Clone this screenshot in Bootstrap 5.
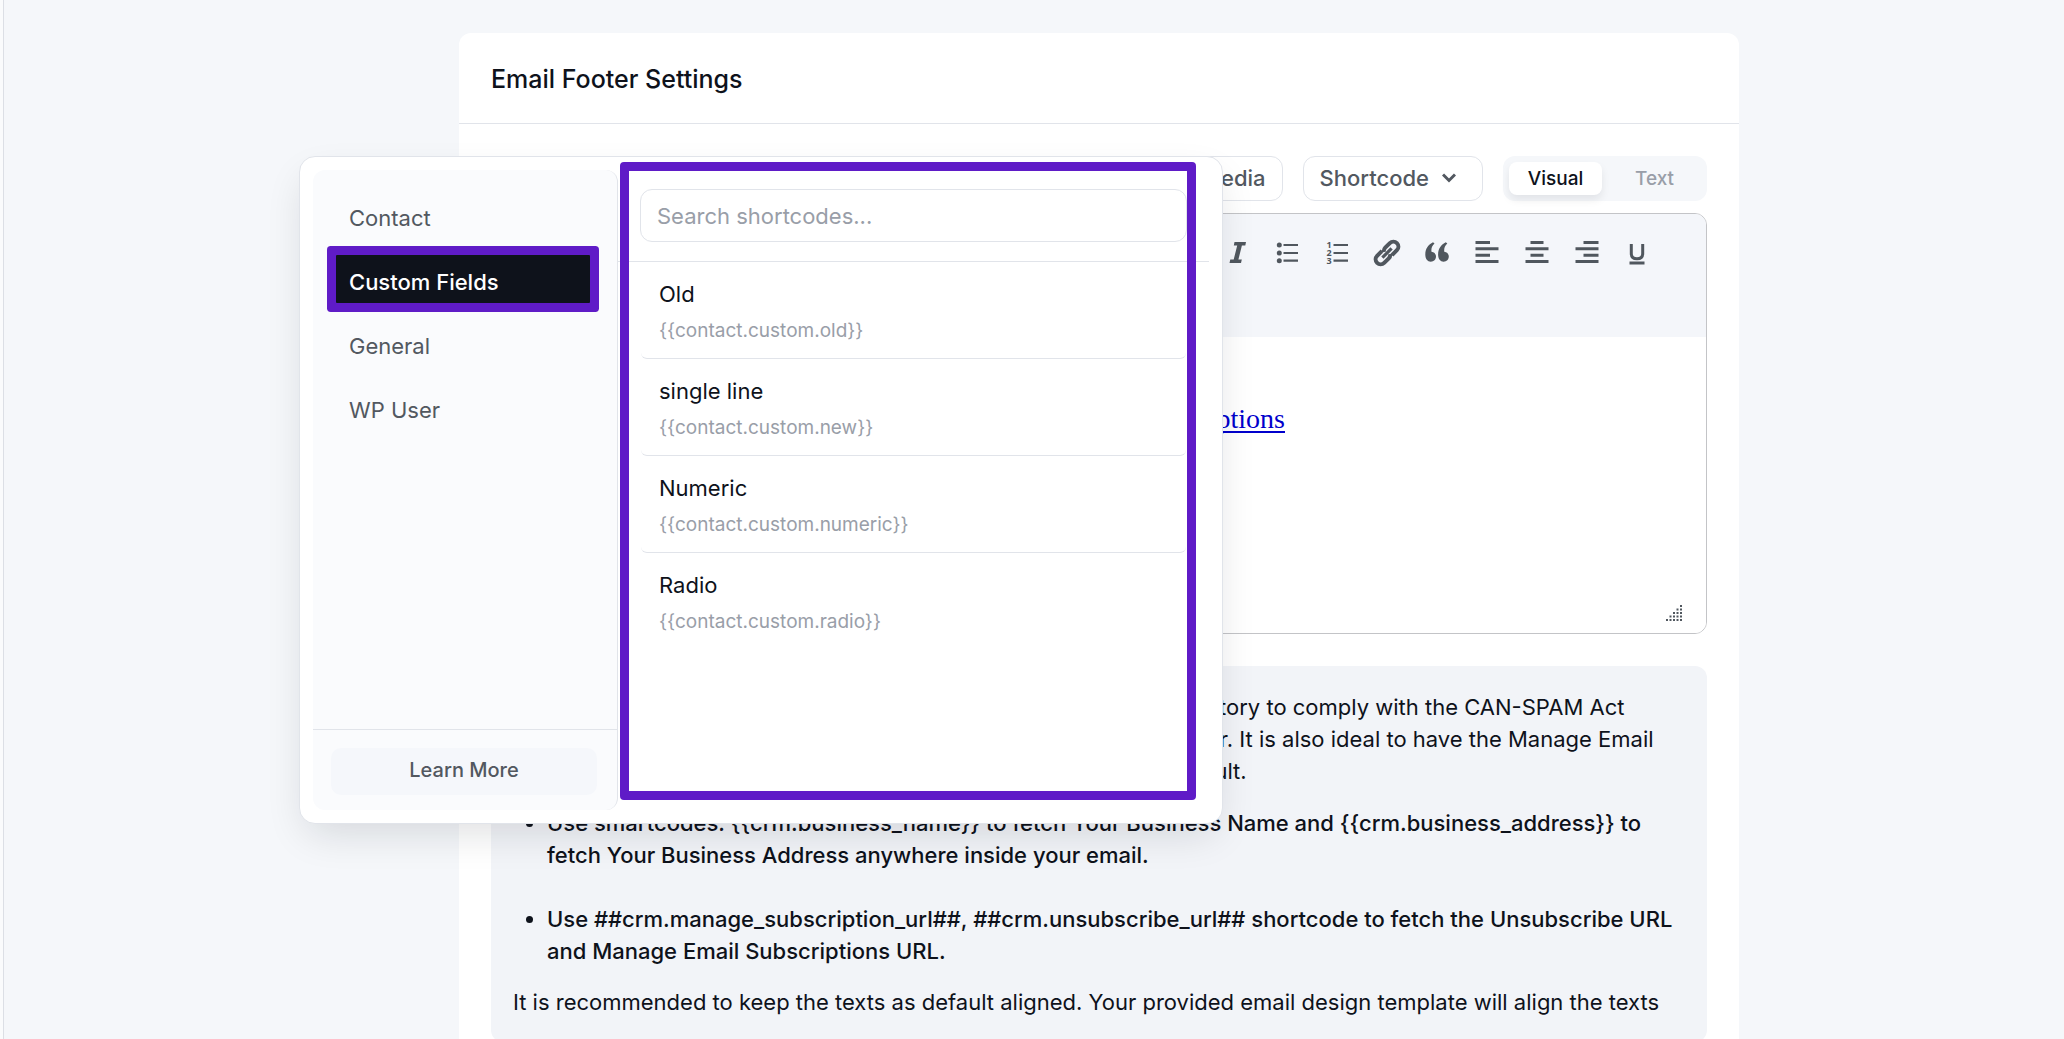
<!DOCTYPE html>
<html lang="en">
<head>
<meta charset="utf-8">
<meta name="viewport" content="width=device-width, initial-scale=1">
<title>Email Footer Settings</title>
<link href="https://cdn.jsdelivr.net/npm/bootstrap@5.3.0/dist/css/bootstrap.min.css" rel="stylesheet">
<style>
  :root { --ink:#0e121b; --muted:#525860; --soft:#999ea8; --line:#e1e4ea; --wash:#f5f7fa; --mark:#5f1bc7; }
  html { scrollbar-width:none; }
  html::-webkit-scrollbar { display:none; }
  body { background:var(--wash); color:var(--ink); font-family:Inter,"Liberation Sans",sans-serif; font-size:22px; line-height:32px; border-left:3px solid #fafbfc; }
  main { border-left:1px solid #dcdfe5; padding:33px 0 0 130px; min-height:100vh; }
  .settings-panel { max-width:1280px; background:#fff; border-radius:12px; }
  .panel-title { font-size:25px; font-weight:500; line-height:32px; padding:30px 32px 28px; border-bottom:1px solid var(--line); }
  .panel-content { padding:32px; }
  .editor-actions { gap:20px; }
  .tool-btn { border:1px solid var(--line); border-radius:12px; background:#fff; color:var(--muted); font-weight:500; height:45px; padding:0 16px 2px; gap:13px; }
  .tool-btn svg { margin-right:10px; }
  .mode-switch { background:var(--wash); border-radius:12px; padding:6px; height:45px; width:204px; gap:6px; }
  .mode-switch button { flex:1; border:0; background:none; border-radius:8px; font-size:19px; font-weight:500; line-height:24px; color:var(--soft); padding:0; }
  .mode-switch .on { background:#fff; color:var(--ink); box-shadow:0 5px 8px rgba(14,18,27,.08); }
  .editor { margin-top:12px; border:1px solid #c3c4c7; border-radius:12px; overflow:hidden; }
  .editor-tools { background:#f4f6fa; height:123px; padding:22px 52px 0 24px; gap:16px; }
  .editor-tools button { width:34px; height:34px; border:0; background:none; padding:0; color:#50575e; }
  .editor-tools select { width:180px; height:34px; font-size:20px; border:1px solid var(--line); border-radius:8px; background:#fff; }
  .editor-tools svg { display:block; }
  .editor-page { height:296px; padding:66px 421px 0 17px; font-family:"Liberation Serif",serif; font-size:28px; }
  .editor-page a { color:#0000cc; text-underline-offset:3px; text-decoration-thickness:2px; }
  .grip { right:24px; bottom:12px; }
  .note { margin-top:32px; background:#f2f4f8; border-radius:12px; padding:25px 22px 24px; }
  .note p { margin:0; }
  .note ul { margin:20px 0 19px; padding-left:34px; font-weight:500; }
  .note li + li { margin-top:32px; }
  .picker { left:-160px; top:123px; width:924px; height:668px; background:#fff; border:1px solid var(--line); border-radius:16px; padding:13px; box-shadow:0 16px 40px -8px rgba(14,18,27,.14); z-index:10; }
  .picker-side { width:305px; background:#fafbfd; border-right:1px solid var(--line); border-radius:12px; }
  .picker-nav { padding:21px 27px 0 23px; gap:16px; }
  .picker-nav button { border:0; background:none; color:var(--muted); text-align:left; height:48px; padding:6px 13px 0; }
  .picker-nav .on { background:var(--ink); color:#fff; font-weight:500; box-shadow:0 0 0 9px var(--mark); border-radius:1px; }
  .picker-foot { border-top:1px solid var(--line); padding:18px 20px 15px 18px; }
  .picker-foot button { width:100%; height:47px; border:0; border-radius:10px; background:#f5f7fb; color:var(--muted); font-size:20px; font-weight:500; padding:0 0 4px; }
  .picker-search { padding:19px 22px; border-bottom:1px solid var(--line); }
  .picker-search input { width:100%; height:53px; border:1px solid var(--line); border-radius:12px; padding:0 16px; color:var(--ink); display:block; }
  .picker-search input::placeholder { color:var(--soft); opacity:1; }
  .picker-list { padding:0 23px; margin:0; }
  .picker-list li { list-style:none; padding:16px 18px 0; border-bottom:1px solid var(--line); border-radius:6px; height:97px; }
  .picker-list li:last-child { border-bottom:0; }
  .field-code { font-size:19px; line-height:32px; color:var(--soft); margin-top:5px; }
  .picker-mark { left:320px; top:5px; width:576px; height:638px; border:9px solid var(--mark); border-radius:4px; pointer-events:none; }
</style>
</head>
<body>
<main>
  <section class="settings-panel position-relative mx-auto">
    <h1 class="panel-title m-0">Email Footer Settings</h1>
    <div class="panel-content">
      <div class="editor-actions d-flex justify-content-end align-items-center">
        <button class="tool-btn d-flex align-items-center" type="button">Add Media</button>
        <button class="tool-btn d-flex align-items-center" type="button">Shortcode
          <svg width="14" height="10" viewBox="0 0 14 10" fill="none" stroke="currentColor" stroke-width="3"><path d="M1 1.500 7 7.500 13 1.500"/></svg>
        </button>
        <div class="mode-switch d-flex"><button class="on" type="button">Visual</button><button type="button">Text</button></div>
      </div>

      <div class="editor">
        <div class="editor-tools d-flex justify-content-end">
          <select class="me-auto" aria-label="Text style"><option>Paragraph</option></select>
          <button type="button" aria-label="Bold"><svg width="34" height="34" fill="none" stroke="currentColor" stroke-width="4"><path d="M12 8v18h6a4.500 4.500 0 0 0 0-9h-6 5a4.500 4.500 0 0 0 0-9z"/></svg></button>
          <button type="button" aria-label="Italic"><svg width="34" height="34" fill="currentColor"><path d="M14.500 6H26l-.7 3.400h-3.400L18.400 23.600h3.400L21 27H9.500l.8-3.400h3.400L17.200 9.400h-3.400z"/></svg></button>
          <button type="button" aria-label="Bulleted list"><svg width="34" height="34" fill="currentColor"><circle cx="9.300" cy="9" r="2.500"/><circle cx="9.300" cy="17" r="2.500"/><circle cx="9.300" cy="24.700" r="2.500"/><path d="M13.500 7.900H28v2.200H13.500zM13.500 15.900H28v2.200H13.500zM13.500 23.600H28v2.200H13.500z"/></svg></button>
          <button type="button" aria-label="Numbered list"><svg width="34" height="34" fill="currentColor" font-family="Open Sans" font-size="9" font-weight="700"><path d="M13.500 7.900H28v2.200H13.500zM13.500 15.900H28v2.200H13.500zM13.500 23.600H28v2.200H13.500z"/><text x="6.500" y="11.500">1</text><text x="6.500" y="19.500">2</text><text x="6.500" y="27.500">3</text></svg></button>
          <button type="button" aria-label="Insert link"><svg width="34" height="34" fill="none" stroke="currentColor" stroke-width="4"><g transform="rotate(-45 17 17)"><path d="M15 12H8a5 5 0 0 0 0 10h6.500a5 5 0 0 0 4-2M19 22H26a5 5 0 0 0 0-10h-6.500a5 5 0 0 0-4 2"/><path d="M10.500 17h13" stroke-width="3.200"/></g></svg></button>
          <button type="button" aria-label="Blockquote"><svg width="34" height="34" fill="currentColor"><path id="q" d="M14.500 7.500 13 6.200C8.500 8.300 5.300 12.400 5.300 18.500c0 4.300 2.200 7.200 5.500 7.200 3 0 5.200-2.200 5.200-5.100 0-2.700-1.800-4.700-4.500-4.900-.5-3.200.6-6 3-8.200z"/><use href="#q" x="12.800"/></svg></button>
          <button type="button" aria-label="Align left"><svg width="34" height="34" fill="currentColor"><path d="M5.500 5H20v3H5.500zM5.500 11.300h23v3h-23zM5.500 17.700H20v3H5.500zM5.500 24h23v3h-23z"/></svg></button>
          <button type="button" aria-label="Align center"><svg width="34" height="34" fill="currentColor"><path d="M10.500 5h13v3h-13zM5.500 11.300h23v3h-23zM10.500 17.700h13v3h-13zM5.500 24h23v3h-23z"/></svg></button>
          <button type="button" aria-label="Align right"><svg width="34" height="34" fill="currentColor"><path d="M13.500 5h15v3h-15zM5.500 11.300h23v3h-23zM13.500 17.700h15v3h-15zM5.500 24h23v3h-23z"/></svg></button>
          <button type="button" aria-label="Underline"><svg width="34" height="34" fill="none" stroke="currentColor" stroke-width="3"><path d="M11.300 8v9.500c0 3.600 2.200 5.300 5.700 5.300s5.700-1.700 5.700-5.300V8M9.500 27h15"/></svg></button>
        </div>
        <div class="editor-page position-relative bg-white text-end">
          <a href="#">Manage your Email Subscriptions</a>
          <svg class="grip position-absolute" width="16" height="16" fill="#50575e"><path d="M14 0h2v2h-2zM10.500 3.500h2v2h-2zM14 3.500h2v2h-2zM7 7h2v2H7zM10.500 7h2v2h-2zM14 7h2v2h-2zM3.500 10.500h2v2h-2zM7 10.500h2v2H7zM10.500 10.500h2v2h-2zM14 10.500h2v2h-2zM0 14h2v2H0zM3.500 14h2v2h-2zM7 14h2v2H7zM10.500 14h2v2h-2zM14 14h2v2h-2z"/></svg>
        </div>
      </div>

      <div class="note">
        <p>Please make sure your emails have the unsubscribe link. It is mandatory to comply with the CAN-SPAM Act besides containing your full business name and address in the footer. It is also ideal to have the Manage Email Subscription link in the footer, so every message includes it by default.</p>
        <ul>
          <li>Use smartcodes: {{crm.business_name}} to fetch Your Business Name and {{crm.business_address}} to fetch Your Business Address anywhere inside your email.</li>
          <li>Use ##crm.manage_subscription_url##, ##crm.unsubscribe_url## shortcode to fetch the Unsubscribe URL and Manage Email Subscriptions URL.</li>
        </ul>
        <p>It is recommended to keep the texts as default aligned. Your provided email design template will align the texts</p>
      </div>
    </div>

    <div class="picker position-absolute d-flex">
      <div class="picker-side d-flex flex-column">
        <div class="picker-nav d-flex flex-column flex-grow-1">
          <button type="button">Contact</button>
          <button class="on" type="button">Custom Fields</button>
          <button type="button">General</button>
          <button type="button">WP User</button>
        </div>
        <div class="picker-foot"><button type="button">Learn More</button></div>
      </div>
      <div class="flex-grow-1">
        <div class="picker-search"><input type="text" placeholder="Search shortcodes..." aria-label="Search shortcodes"></div>
        <ul class="picker-list">
          <li>Old<div class="field-code">{{contact.custom.old}}</div></li>
          <li>single line<div class="field-code">{{contact.custom.new}}</div></li>
          <li>Numeric<div class="field-code">{{contact.custom.numeric}}</div></li>
          <li>Radio<div class="field-code">{{contact.custom.radio}}</div></li>
        </ul>
      </div>
      <div class="picker-mark position-absolute"></div>
    </div>
  </section>
</main>
<script src="https://cdn.jsdelivr.net/npm/bootstrap@5.3.0/dist/js/bootstrap.bundle.min.js"></script>
</body>
</html>
